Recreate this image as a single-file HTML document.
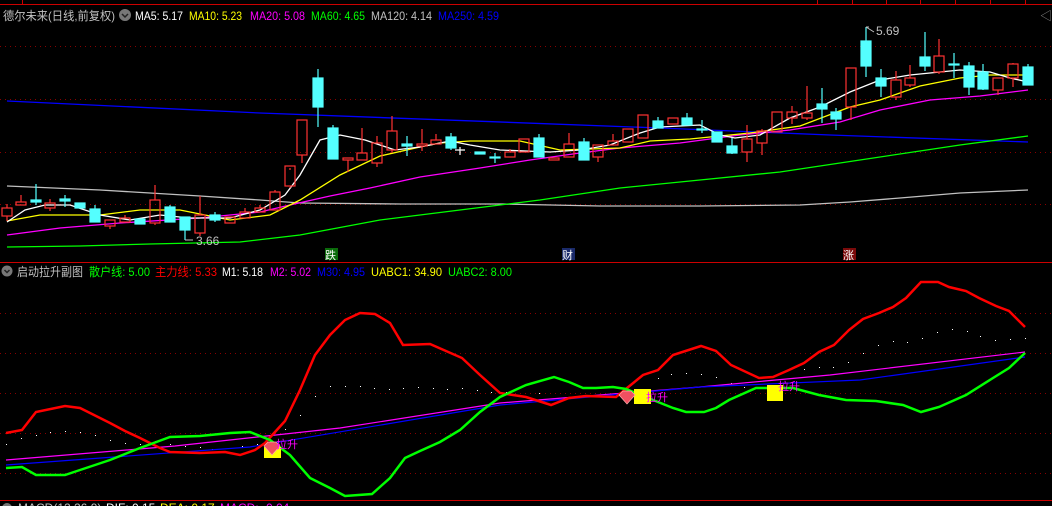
<!DOCTYPE html>
<html><head><meta charset="utf-8"><style>
html,body{margin:0;padding:0;background:#000;width:1052px;height:506px;overflow:hidden}
svg{display:block}
text{font-family:"Liberation Sans","Noto Sans CJK SC",sans-serif;font-size:12px}
</style></head><body>
<svg width="1052" height="506" viewBox="0 0 1052 506" xmlns="http://www.w3.org/2000/svg">
<rect width="1052" height="506" fill="#000"/>
<line x1="0" y1="4.5" x2="1052" y2="4.5" stroke="#c00" stroke-width="1"/>
<line x1="22.5" y1="0" x2="22.5" y2="5" stroke="#c00"/>
<g stroke="#c00"><line x1="817.5" y1="0" x2="817.5" y2="5"/><line x1="852.5" y1="0" x2="852.5" y2="5"/><line x1="886.5" y1="0" x2="886.5" y2="5"/><line x1="920.5" y1="0" x2="920.5" y2="5"/><line x1="955.5" y1="0" x2="955.5" y2="5"/><line x1="990.5" y1="0" x2="990.5" y2="5"/><line x1="1025.5" y1="0" x2="1025.5" y2="5"/></g>
<g style="font-size:13px" lengthAdjust="spacingAndGlyphs">
<text x="3" y="20" fill="#c0c0c0" textLength="112" lengthAdjust="spacingAndGlyphs">德尔未来(日线,前复权)</text>
<text x="135" y="20" fill="#fff" textLength="48" lengthAdjust="spacingAndGlyphs">MA5: 5.17</text>
<text x="189" y="20" fill="#ff0" textLength="53" lengthAdjust="spacingAndGlyphs">MA10: 5.23</text>
<text x="250" y="20" fill="#f0f" textLength="55" lengthAdjust="spacingAndGlyphs">MA20: 5.08</text>
<text x="311" y="20" fill="#0f0" textLength="54" lengthAdjust="spacingAndGlyphs">MA60: 4.65</text>
<text x="371" y="20" fill="#c0c0c0" textLength="61" lengthAdjust="spacingAndGlyphs">MA120: 4.14</text>
<text x="438" y="20" fill="#00f" textLength="61" lengthAdjust="spacingAndGlyphs">MA250: 4.59</text>
</g>
<circle cx="125" cy="15" r="6" fill="#777"/><path d="M122 14l3 3 3-3" stroke="#222" stroke-width="1.5" fill="none"/>
<text x="1040" y="20" fill="#888">◁</text>
<g stroke="#800" stroke-dasharray="1 4"><line x1="0" y1="46.5" x2="1052" y2="46.5"/><line x1="0" y1="99.5" x2="1052" y2="99.5"/><line x1="0" y1="152.5" x2="1052" y2="152.5"/><line x1="0" y1="204.5" x2="1052" y2="204.5"/></g>
<g fill="none" stroke-width="1.3">
<polyline stroke="#00f" points="7,101 260,113 660,128 830,135 1028,142"/>
<polyline stroke="#c0c0c0" points="7,186 100,190 200,196 260,200 300,203 400,204 500,204 600,206 700,206 800,205 850,202 900,198 960,193 1028,190"/>
<polyline stroke="#0f0" points="7,247 80,246 150,244 240,242 300,235 380,220 460,210 540,200 620,188 700,180 780,172 860,160 960,145 1028,136"/>
<polyline stroke="#f0f" points="7,235 60,228 120,223 200,218 260,212 290,205 330,196 370,188 420,177 480,168 530,160 580,153 620,148 680,143 740,135 790,130 840,122 880,110 930,100 980,96 1028,90"/>
<polyline stroke="#ff0" points="7,221 40,215 100,215 140,210 180,210 230,220 270,215 300,200 340,175 380,156 420,147 440,143 470,141 520,141 560,150 620,148 650,141 690,139 710,137 750,133 800,126 850,107 880,100 920,86 960,78 990,75 1028,75"/>
<polyline stroke="#fff" points="7,222 25,210 45,205 70,205 100,215 130,220 160,215 190,218 230,218 260,210 285,195 300,175 320,140 340,135 365,140 395,150 420,147 450,141 470,145 500,150 550,152 580,150 610,145 640,133 660,127 700,125 720,135 735,138 760,135 790,118 820,107 850,92 880,80 910,75 940,72 960,70 990,72 1010,78 1028,82"/>
</g>
<g stroke="#ff3232" fill="none" stroke-width="1.2">
<path d="M7 204v4M7 216v5M21 195v7M50 199v4M50 208v3M110 226v3M125 215v3M155 185v15M155 223v2M200 196v19M200 233v3M245 208v4M260 205v3M275 190v2M290 168v2M290 187v1M302 155v8M348 160v12M362 128v25M377 136v7M377 163v4M392 116v15M392 150v3M422 129v15M422 146v5M436 134v6M510 149v3M569 133v11M598 157v5M613 134v7M747 125v14M747 152v10M762 129v2M762 143v12M792 106v6M792 118v6M807 86v27M807 118v2M851 107v13M896 71v9M896 97v3M910 65v13M910 85v2M939 39v17M939 72v2M998 90v5M1013 63v1M1013 78v9"/>
<rect x="2" y="208" width="10" height="8"/><rect x="16" y="202" width="10" height="3"/><rect x="45" y="203" width="10" height="5"/><rect x="105" y="220" width="10" height="6"/><rect x="120" y="218" width="10" height="4"/><rect x="150" y="200" width="10" height="23"/><rect x="195" y="215" width="10" height="18"/><rect x="225" y="217" width="10" height="6"/><rect x="240" y="212" width="10" height="6"/><rect x="255" y="208" width="10" height="4"/><rect x="270" y="192" width="10" height="18"/><rect x="285" y="166" width="10" height="20"/><rect x="297" y="120" width="10" height="35"/><rect x="343" y="158" width="10" height="2"/><rect x="357" y="153" width="10" height="7"/><rect x="372" y="143" width="10" height="20"/><rect x="387" y="131" width="10" height="19"/><rect x="417" y="144" width="10" height="2"/><rect x="431" y="140" width="10" height="4"/><rect x="505" y="152" width="10" height="5"/><rect x="519" y="139" width="10" height="13"/><rect x="549" y="158" width="10" height="2"/><rect x="564" y="144" width="10" height="13"/><rect x="593" y="145" width="10" height="12"/><rect x="608" y="141" width="10" height="4"/><rect x="623" y="129" width="10" height="13"/><rect x="638" y="115" width="10" height="23"/><rect x="668" y="118" width="10" height="6"/><rect x="742" y="139" width="10" height="13"/><rect x="757" y="131" width="10" height="12"/><rect x="772" y="112" width="10" height="20"/><rect x="787" y="112" width="10" height="6"/><rect x="802" y="113" width="10" height="5"/><rect x="846" y="68" width="10" height="39"/><rect x="891" y="80" width="10" height="17"/><rect x="905" y="78" width="10" height="7"/><rect x="934" y="56" width="10" height="16"/><rect x="993" y="78" width="10" height="12"/><rect x="1008" y="64" width="10" height="14"/>
</g>
<g fill="#54ffff" stroke="#54ffff" stroke-width="1.2">
<path d="M36 184v21M65 195v12M80 203v5M95 205v17M170 205v17M185 230v10M215 212v10M318 69v58M333 125v4M407 136v20M451 133v17M495 153v10M539 134v23M584 138v22M658 117v11M687 113v12M702 120v13M732 138v16M822 88v35M836 108v22M866 27v50M881 69v28M925 32v39M954 53v25M969 62v33M983 64v26M1028 64v21"/>
<rect x="31" y="200" width="10" height="2"/><rect x="60" y="199" width="10" height="2"/><rect x="75" y="203" width="10" height="5"/><rect x="90" y="209" width="10" height="13"/><rect x="135" y="219" width="10" height="5"/><rect x="165" y="207" width="10" height="15"/><rect x="180" y="217" width="10" height="13"/><rect x="210" y="215" width="10" height="5"/><rect x="313" y="78" width="10" height="29"/><rect x="328" y="128" width="10" height="31"/><rect x="402" y="144" width="10" height="2"/><rect x="446" y="137" width="10" height="11"/><rect x="475" y="152" width="10" height="2"/><rect x="490" y="157" width="10" height="1"/><rect x="534" y="138" width="10" height="19"/><rect x="579" y="142" width="10" height="18"/><rect x="653" y="121" width="10" height="7"/><rect x="682" y="118" width="10" height="7"/><rect x="697" y="129" width="10" height="1"/><rect x="712" y="132" width="10" height="10"/><rect x="727" y="146" width="10" height="7"/><rect x="817" y="104" width="10" height="5"/><rect x="831" y="112" width="10" height="7"/><rect x="861" y="41" width="10" height="25"/><rect x="876" y="78" width="10" height="8"/><rect x="920" y="57" width="10" height="9"/><rect x="949" y="64" width="10" height="1"/><rect x="964" y="66" width="10" height="21"/><rect x="978" y="72" width="10" height="17"/><rect x="1023" y="67" width="10" height="18"/>
</g>
<path d="M460 147v8M455 150h10" stroke="#fff" stroke-width="1.2"/>
<path d="M866 27h3M866 27l8 5" stroke="#c0c0c0" fill="none"/><text x="876" y="35" fill="#c0c0c0">5.69</text>
<path d="M185 240l8 0" stroke="#c0c0c0"/><text x="196" y="245" fill="#c0c0c0">3.66</text>
<rect x="325" y="248" width="13" height="12" fill="#0a6a0a"/><text x="325" y="259" fill="#fff" style="font-size:11px">跌</text>
<rect x="562" y="248" width="13" height="12" fill="#1a2a6a"/><text x="562" y="259" fill="#fff" style="font-size:11px">财</text>
<rect x="843" y="248" width="13" height="12" fill="#7a0a0a"/><text x="843" y="259" fill="#fff" style="font-size:11px">涨</text>
<line x1="0" y1="262.5" x2="1052" y2="262.5" stroke="#c00"/>
<circle cx="7" cy="271" r="5.5" fill="#777"/><path d="M4.5 270l2.5 2.5 2.5-2.5" stroke="#222" stroke-width="1.5" fill="none"/>
<g style="font-size:13px">
<text x="17" y="276" fill="#c0c0c0" textLength="66" lengthAdjust="spacingAndGlyphs">启动拉升副图</text>
<text x="89" y="276" fill="#0f0" textLength="61" lengthAdjust="spacingAndGlyphs">散户线: 5.00</text>
<text x="155" y="276" fill="#f00" textLength="62" lengthAdjust="spacingAndGlyphs">主力线: 5.33</text>
<text x="222" y="276" fill="#fff" textLength="41" lengthAdjust="spacingAndGlyphs">M1: 5.18</text>
<text x="270" y="276" fill="#f0f" textLength="41" lengthAdjust="spacingAndGlyphs">M2: 5.02</text>
<text x="317" y="276" fill="#00f" textLength="48" lengthAdjust="spacingAndGlyphs">M30: 4.95</text>
<text x="371" y="276" fill="#ff0" textLength="71" lengthAdjust="spacingAndGlyphs">UABC1: 34.90</text>
<text x="448" y="276" fill="#0f0" textLength="64" lengthAdjust="spacingAndGlyphs">UABC2: 8.00</text>
</g>
<g stroke="#800" stroke-dasharray="1 4"><line x1="0" y1="313.5" x2="1052" y2="313.5"/><line x1="0" y1="353.5" x2="1052" y2="353.5"/><line x1="0" y1="393.5" x2="1052" y2="393.5"/><line x1="0" y1="433.5" x2="1052" y2="433.5"/><line x1="0" y1="473.5" x2="1052" y2="473.5"/></g>
<g fill="#fff"><rect x="6" y="444" width="1" height="1"/><rect x="21" y="438" width="1" height="1"/><rect x="36" y="435" width="1" height="1"/><rect x="50" y="432" width="1" height="1"/><rect x="65" y="431" width="1" height="1"/><rect x="80" y="432" width="1" height="1"/><rect x="95" y="435" width="1" height="1"/><rect x="110" y="440" width="1" height="1"/><rect x="125" y="443" width="1" height="1"/><rect x="140" y="444" width="1" height="1"/><rect x="155" y="441" width="1" height="1"/><rect x="170" y="444" width="1" height="1"/><rect x="185" y="446" width="1" height="1"/><rect x="200" y="447" width="1" height="1"/><rect x="212" y="449" width="1" height="1"/><rect x="242" y="446" width="1" height="1"/><rect x="257" y="444" width="1" height="1"/><rect x="285" y="429" width="1" height="1"/><rect x="300" y="415" width="1" height="1"/><rect x="315" y="396" width="1" height="1"/><rect x="330" y="386" width="1" height="1"/><rect x="345" y="386" width="1" height="1"/><rect x="360" y="386" width="1" height="1"/><rect x="374" y="388" width="1" height="1"/><rect x="389" y="389" width="1" height="1"/><rect x="403" y="388" width="1" height="1"/><rect x="418" y="387" width="1" height="1"/><rect x="433" y="388" width="1" height="1"/><rect x="447" y="389" width="1" height="1"/><rect x="462" y="388" width="1" height="1"/><rect x="477" y="390" width="1" height="1"/><rect x="491" y="392" width="1" height="1"/><rect x="506" y="392" width="1" height="1"/><rect x="539" y="393" width="1" height="1"/><rect x="658" y="378" width="1" height="1"/><rect x="671" y="374" width="1" height="1"/><rect x="686" y="373" width="1" height="1"/><rect x="701" y="374" width="1" height="1"/><rect x="716" y="377" width="1" height="1"/><rect x="731" y="383" width="1" height="1"/><rect x="744" y="387" width="1" height="1"/><rect x="804" y="369" width="1" height="1"/><rect x="819" y="367" width="1" height="1"/><rect x="833" y="367" width="1" height="1"/><rect x="848" y="362" width="1" height="1"/><rect x="863" y="353" width="1" height="1"/><rect x="878" y="345" width="1" height="1"/><rect x="893" y="341" width="1" height="1"/><rect x="907" y="342" width="1" height="1"/><rect x="922" y="338" width="1" height="1"/><rect x="937" y="332" width="1" height="1"/><rect x="952" y="329" width="1" height="1"/><rect x="967" y="331" width="1" height="1"/><rect x="980" y="336" width="1" height="1"/><rect x="995" y="340" width="1" height="1"/><rect x="1010" y="339" width="1" height="1"/><rect x="1025" y="338" width="1" height="1"/></g>
<g fill="none" stroke-width="1.2">
<polyline stroke="#f0f" points="6,460 175,446 340,428 500,403 700,387 830,375 1025,352"/>
<polyline stroke="#00f" points="6,465 250,447 500,405 700,387 860,380 1025,357"/>
</g>
<g fill="none" stroke-width="2.5">
<polyline stroke="#f00" points="6,433 22,430 36,412 65,406 80,408 110,423 125,431 140,438 160,448 170,452 200,453 225,452 240,455 255,450 265,443 285,421 300,390 315,355 330,335 345,320 360,313 375,314 390,323 403,345 430,344 462,358 480,375 500,393 526,397 551,405 569,398 586,396 616,397 643,375 658,370 673,355 701,346 716,351 731,365 759,378 773,377 789,370 804,363 819,352 834,345 849,330 863,319 879,313 893,307 906,298 921,282 938,282 949,287 966,291 979,298 996,306 1009,311 1025,327"/>
<polyline stroke="#0f0" points="6,468 22,467 36,475 65,475 80,470 110,460 140,448 170,437 200,436 230,433 250,432 270,440 290,455 310,478 330,488 345,496 372,494 390,478 405,458 420,451 440,442 460,430 480,412 500,397 526,385 554,377 569,382 583,388 596,388 613,387 626,389 653,400 673,408 686,412 704,412 716,408 729,400 756,388 793,388 819,395 846,400 876,401 903,405 921,412 939,407 966,395 993,378 1009,368 1025,353"/>
</g>
<rect x="264" y="447" width="17" height="11" fill="#ff0"/>
<path d="M264 446l4-4h8l4 4-8 9z" fill="#f05060" stroke="#faa" stroke-width="0.7"/>
<text x="276" y="448" fill="#f0f" style="font-size:11px">拉升</text>
<rect x="634" y="389" width="17" height="15" fill="#ff0"/>
<path d="M619 395l4-4h8l4 4-8 9z" fill="#f05060" stroke="#faa" stroke-width="0.7"/>
<text x="646" y="401" fill="#f0f" style="font-size:11px">拉升</text>
<rect x="767" y="385" width="16" height="16" fill="#ff0"/>
<text x="778" y="390" fill="#f0f" style="font-size:11px">拉升</text>
<line x1="0" y1="500.5" x2="1052" y2="500.5" stroke="#c00"/>
<circle cx="7" cy="508" r="5" fill="#777"/>
<text x="18" y="512" fill="#c0c0c0">MACD(12,26,9)</text>
<text x="106" y="512" fill="#fff">DIF: 0.15</text>
<text x="160" y="512" fill="#ff0">DEA: 0.17</text>
<text x="220" y="512" fill="#f0f">MACD: -0.04</text>
</svg>
</body></html>
